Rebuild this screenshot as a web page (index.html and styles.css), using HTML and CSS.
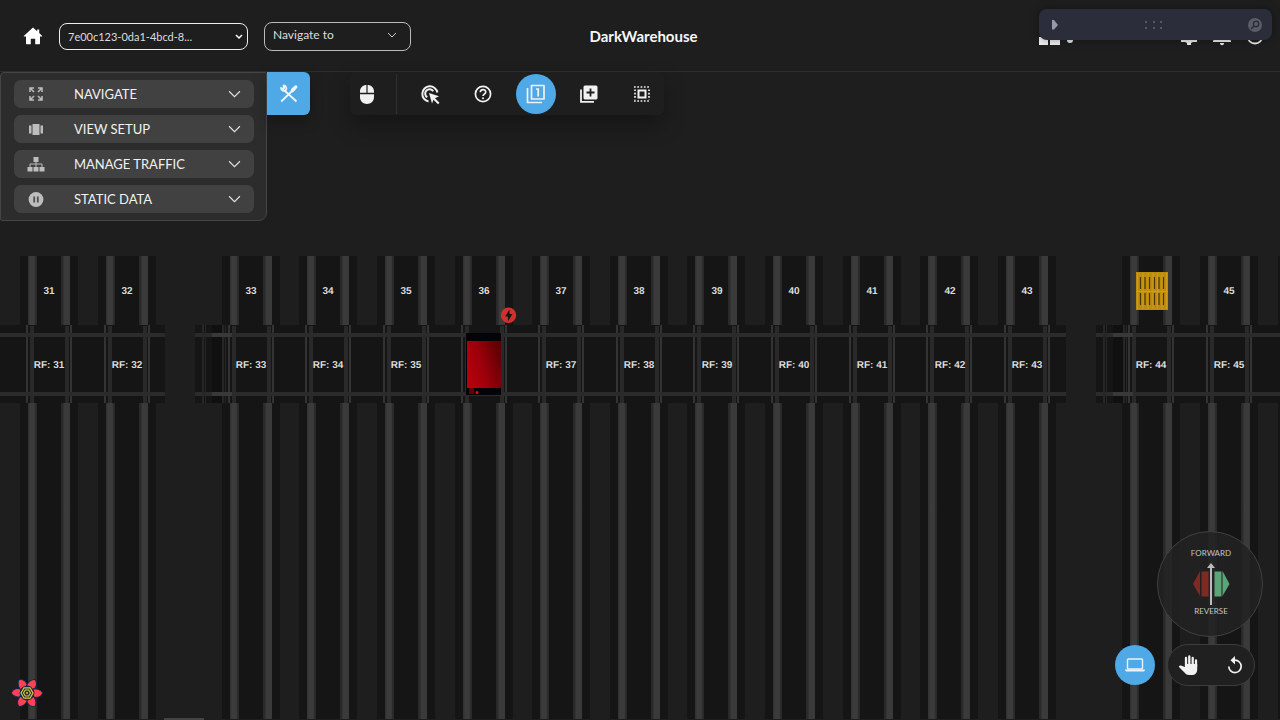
FILE: index.html
```html
<!DOCTYPE html>
<html lang="en">
<head>
<meta charset="utf-8">
<title>DarkWarehouse</title>
<link rel="stylesheet" href="styles.css">
</head>
<body>
<div class="app">
  <svg class="map" role="img" aria-label="Warehouse map">
    <defs>
      <linearGradient id="rail"><stop offset="0" stop-color="#303030"/><stop offset=".25" stop-color="#3b3b3b"/><stop offset=".7" stop-color="#3b3b3b"/><stop offset=".8" stop-color="#2d2d2d"/><stop offset="1" stop-color="#282828"/></linearGradient>
      <linearGradient id="railr"><stop offset="0" stop-color="#282828"/><stop offset=".25" stop-color="#2d2d2d"/><stop offset=".35" stop-color="#3b3b3b"/><stop offset="1" stop-color="#393939"/></linearGradient>
      <linearGradient id="body" x1="0" y1=".7" x2="1" y2=".3"><stop offset="0" stop-color="#b8000b"/><stop offset=".45" stop-color="#9c000a"/><stop offset="1" stop-color="#600005"/></linearGradient>
      <g id="lane">
        <path fill="#151515" d="M-29 256h58v69h-58zM-29 403h58v316h-58z"/>
        <path fill="url(#rail)" d="M-21 256h9v70h-9zM-21 403h9v316h-9z"/>
        <path fill="url(#railr)" d="M12 256h9v70h-9zM12 403h9v316h-9z"/>
      </g>
      <g id="cross">
        <path fill="#333" d="M-23 325h2v78h-2zM21 325h2v78h-2z"/>
        <path fill="#292929" d="M-19 326h4v77h-4zM16 326h4v77h-4z"/>
      </g>
      <g id="buffer">
        <path fill="#101010" d="M17 325h12v78h-12z"/>
        <path fill="#262626" d="M7 325h2v78h-2zM10 325h1v78h-1zM27 325h2v78h-2zM30 325h1v78h-1z"/>
        <path fill="#393939" d="M17 333h20v4h-20zM17 392h20v4h-20z"/>
      </g>
    </defs>
    <use href="#lane" x="49"/><use href="#lane" x="127"/><use href="#lane" x="251"/><use href="#lane" x="328"/><use href="#lane" x="406"/><use href="#lane" x="484"/><use href="#lane" x="561"/><use href="#lane" x="639"/><use href="#lane" x="716"/><use href="#lane" x="794"/><use href="#lane" x="872"/><use href="#lane" x="949"/><use href="#lane" x="1027"/><use href="#lane" x="1151"/><use href="#lane" x="1229"/><use href="#lane" x="1307"/>
    <path fill="#151515" d="M0 325h165v78H0zM195 325h871v78H195zM1096 325h900v78h-900z"/>
    <use href="#cross" x="49"/><use href="#cross" x="127"/><use href="#cross" x="251"/><use href="#cross" x="328"/><use href="#cross" x="406"/><use href="#cross" x="484"/><use href="#cross" x="561"/><use href="#cross" x="639"/><use href="#cross" x="716"/><use href="#cross" x="794"/><use href="#cross" x="872"/><use href="#cross" x="949"/><use href="#cross" x="1027"/><use href="#cross" x="1151"/><use href="#cross" x="1229"/><use href="#cross" x="1307"/>
    <path fill="#2b2b2b" d="M0 333h165v4H0zM0 392h165v4H0zM195 333h871v4H195zM195 392h871v4H195zM1096 333h900v4h-900zM1096 392h900v4h-900z"/>
    <use href="#buffer" x="195"/><use href="#buffer" x="1096"/>
    <g class="map-label">
      <text x="49" y="294">31</text><text x="127" y="294">32</text><text x="251" y="294">33</text><text x="328" y="294">34</text><text x="406" y="294">35</text><text x="484" y="294">36</text><text x="561" y="294">37</text><text x="639" y="294">38</text><text x="717" y="294">39</text><text x="794" y="294">40</text><text x="872" y="294">41</text><text x="950" y="294">42</text><text x="1027" y="294">43</text><text x="1229" y="294">45</text>
      <text x="49" y="368">RF: 31</text><text x="127" y="368">RF: 32</text><text x="251" y="368">RF: 33</text><text x="328" y="368">RF: 34</text><text x="406" y="368">RF: 35</text><text x="561" y="368">RF: 37</text><text x="639" y="368">RF: 38</text><text x="717" y="368">RF: 39</text><text x="794" y="368">RF: 40</text><text x="872" y="368">RF: 41</text><text x="950" y="368">RF: 42</text><text x="1027" y="368">RF: 43</text><text x="1151" y="368">RF: 44</text><text x="1229" y="368">RF: 45</text>
    </g>
    <g>
      <rect x="466" y="333" width="35" height="62" rx="1" fill="#030308"/>
      <rect x="467" y="341" width="34" height="47" fill="url(#body)"/>
      <rect x="469" y="388" width="5" height="6" fill="#5e0006"/>
      <circle cx="477" cy="392.500" r="1.500" fill="#f00012"/>
      <circle cx="508.500" cy="315.300" r="7.700" fill="#d32f2f"/>
      <path fill="#151515" d="M509.500 309.500v4.500h3l-4.600 7.500v-5h-2.800z"/>
    </g>
    <g>
      <rect x="1136" y="272" width="32" height="38" fill="#bd8c0d"/>
      <path stroke="#d19e12" stroke-width="1" d="M1137.500 273v36M1143 273v36M1148 273v36M1153 273v36M1157.500 273v36M1162 273v36M1166.500 273v36M1136 291.500h32"/>
      <path stroke="#49370a" stroke-width="1.200" d="M1140.500 277v12M1145 277v12M1149.500 277v12M1154.500 277v12M1159 277v12M1163.500 277v12M1140.500 293v12M1145 293v12M1149.500 293v12M1154.500 293v12M1159 293v12M1163.500 293v12"/>
    </g>
  </svg>

  <header class="header">
    <div class="header-left">
      <a class="home" href="#" aria-label="Home"><svg width="20" height="20" viewBox="0 0 20 20"><path fill="#fff" d="M10 1.500 1 9.700c-.4.500-.2.900.4.900H3v6.600c0 .6.400 1 1 1h3.800v-5.400h4.400v5.400H16c.6 0 1-.4 1-1v-6.600h1.600c.6 0 .8-.4.400-.9l-2.800-2.600V3.500h-2v1.800z"/></svg></a>
      <label class="picker picker-id">
        <select aria-label="Warehouse"><option>7e00c123-0da1-4bcd-8...</option></select>
        <svg width="8" height="6" viewBox="0 0 8 6"><path fill="none" stroke="#fff" stroke-width="1.500" d="m1 1 3 3 3-3"/></svg>
      </label>
      <label class="picker picker-nav">
        <select aria-label="Navigate to"><option>Navigate to</option></select>
        <svg width="10" height="6" viewBox="0 0 10 6"><path fill="none" stroke="#ccc" d="m1 1 4 4 4-4"/></svg>
      </label>
    </div>
    <h1 class="title">DarkWarehouse</h1>
    <div class="header-right">
      <button class="plain" aria-label="Apps"><svg width="34" height="20" viewBox="0 0 34 20"><path fill="#eee" d="M2 2h7v7H2zM11 2h9v7h-9zM0 11h9v8H0zM11 11h10v8H11z"/><circle cx="31" cy="14" r="3" fill="#ddeaf2"/></svg></button>
      <div class="alerts">
        <button class="plain" aria-label="Alarms"><svg width="18" height="20" viewBox="0 0 18 20"><path fill="#eee" d="M1 14v2h4l2 1v2h4v-2l2-1h4v-2l-2-1V8c0-3-2-5-4-6H7C5 3 3 5 3 8v5z"/></svg></button>
        <button class="plain" aria-label="Notifications"><svg width="18" height="20" viewBox="0 0 18 20"><path fill="#eee" d="M0 14.500v1.500h18v-1.500L15 13V8c0-3-2-5-4-6H7C5 3 3 5 3 8v5zM7 17h4c0 3-4 3-4 0z"/></svg></button>
        <button class="plain" aria-label="Account"><svg width="18" height="20" viewBox="0 0 18 20"><circle cx="9" cy="10" r="7.500" fill="none" stroke="#eee" stroke-width="1.800"/></svg></button>
      </div>
    </div>
  </header>

  <main class="workspace">
    <div class="toolrow">
      <nav class="menu" aria-label="Map menu">
        <button class="menu-item"><svg class="menu-icon" viewBox="0 0 20 20"><path fill="none" stroke="#bdbdbd" stroke-width="1.500" d="M4 8V4h4M4 4l4 4M12 4h4v4M16 4l-4 4M4 12v4h4M4 16l4-4M12 16h4v-4M16 16l-4-4"/></svg><span>NAVIGATE</span><svg class="chevron" viewBox="0 0 12 8"><path d="m1 1 5 5 5-5"/></svg></button>
        <button class="menu-item"><svg class="menu-icon" viewBox="0 0 20 20"><path fill="#bdbdbd" d="M6.500 5h7v11h-7zM3 6.500h2.500v8H3zM14.500 6.500H17v8h-2.500z"/></svg><span>VIEW SETUP</span><svg class="chevron" viewBox="0 0 12 8"><path d="m1 1 5 5 5-5"/></svg></button>
        <button class="menu-item"><svg class="menu-icon" viewBox="0 0 20 20"><path fill="#bdbdbd" d="M7.500 3h5v5h-5zM1.500 13h5v4.500h-5zM7.500 13h5v4.500h-5zM13.500 13h5v4.500h-5z"/><path fill="none" stroke="#bdbdbd" d="M10 8v5M4 13v-3h12v3"/></svg><span>MANAGE TRAFFIC</span><svg class="chevron" viewBox="0 0 12 8"><path d="m1 1 5 5 5-5"/></svg></button>
        <button class="menu-item"><svg class="menu-icon" viewBox="0 0 20 20"><circle cx="10" cy="10.500" r="7.400" fill="#bdbdbd"/><path fill="#505050" d="M7.300 7.500h1.800v6H7.300zM10.900 7.500h1.800v6h-1.800z"/></svg><span>STATIC DATA</span><svg class="chevron" viewBox="0 0 12 8"><path d="m1 1 5 5 5-5"/></svg></button>
      </nav>
      <button class="tools-toggle" aria-label="Tools"><svg width="24" height="24" viewBox="0 0 24 24"><path fill="none" stroke="#f4f4f4" stroke-width="1.800" d="M7.500 8.500 19.500 19.500M4.200 19.500 14 10"/><path fill="#f4f4f4" d="m13.500 10 .5-3 4-3.500c1.500-.8 3 .7 2.200 2.200L17 9.500l-2.500 1.500z"/><path fill="none" stroke="#f4f4f4" stroke-width="1.800" stroke-linejoin="round" d="M6.500 3.500c2.500.2 3.500 2.500 2.500 4.500-2 1.500-4.800.7-5-2l2.500.8.700-.8z"/></svg></button>
      <div class="toolbar" role="toolbar">
        <button class="tool mouse" aria-label="Mouse"><svg width="24" height="24" viewBox="0 0 24 24"><path fill="#f1f1f1" d="M11.400 3v7.800H5V9.500C5 5.500 8 3 11.400 3zM12.600 3C16 3 19 5.500 19 9.500v1.300h-6.400zM5 12.200h14V15c0 9.300-14 9.300-14 0z"/></svg></button>
        <button class="tool" aria-label="Click select"><svg width="24" height="24" viewBox="0 0 24 24"><path fill="none" stroke="#f1f1f1" stroke-width="2" d="M10.500 19.400A7.600 7.600 0 1 1 19.400 10.500M9.300 15.200A4.300 4.300 0 1 1 15.200 9.300"/><path fill="#f1f1f1" d="m11 11 10 3.300-4 2 4.500 4.500-1.500 1.500-4.500-4.500-1.500 3.700z"/></svg></button>
        <button class="tool" aria-label="Help"><svg width="24" height="24" viewBox="0 0 24 24"><circle cx="12" cy="12" r="7.600" fill="none" stroke="#f1f1f1" stroke-width="1.700"/><path fill="none" stroke="#f1f1f1" stroke-width="1.700" d="M9.300 10.200c0-3.500 5.400-3.400 5.400-.2 0 2-2.700 2.200-2.700 4"/><circle cx="12" cy="16.200" r="1" fill="#f1f1f1"/></svg></button>
        <button class="tool active" aria-label="Single layer"><svg width="24" height="24" viewBox="0 0 24 24"><path fill="none" stroke="#f1f1f1" stroke-width="1.700" stroke-linejoin="round" d="M7.500 3.500h12.500v13.500H7.500zM3.500 6v14.500H18"/><path fill="none" stroke="#f1f1f1" stroke-width="1.700" d="M12 7h2.200v7.500"/></svg></button>
        <button class="tool" aria-label="Add layer"><svg width="24" height="24" viewBox="0 0 24 24"><path fill="none" stroke="#f1f1f1" stroke-width="1.800" d="M4 7.500v12.300h13"/><rect x="6.500" y="3.500" width="14" height="14" rx="1.500" fill="#f1f1f1"/><path stroke="#1e1e1e" stroke-width="1.800" d="M13.500 6.500v8M9.500 10.500h8"/></svg></button>
        <button class="tool" aria-label="Select all"><svg width="24" height="24" viewBox="0 0 24 24"><path fill="none" stroke="#f1f1f1" stroke-width="2" d="M8.500 8.500h7v7h-7z"/><path fill="none" stroke="#f1f1f1" stroke-width="1.700" stroke-dasharray="1.700 1.600" d="M4 5h16.300M4 19h16.300M5 7.400v10M19 7.400v10"/></svg></button>
      </div>
    </div>
  </main>

  <div class="float-panel">
    <button class="plain" aria-label="Expand"><svg width="8" height="12" viewBox="0 0 8 12"><path fill="#9699a8" d="M1 1h2l4 5-4 4.500H1z"/></svg></button>
    <svg width="18" height="10" viewBox="0 0 18 10"><path fill="#555966" d="M0 1h2v2H0zM8 1h2v2H8zM15 1h2v2h-2zM0 7h2v2H0zM8 7h2v2H8zM15 7h2v2h-2z"/></svg>
    <button class="plain" aria-label="Search"><svg width="14" height="14" viewBox="0 0 14 14"><circle cx="7" cy="7" r="7" fill="#585d66"/><circle cx="8" cy="6" r="2.700" fill="none" stroke="#2b2e3a" stroke-width="1.400"/><path stroke="#2b2e3a" stroke-width="1.600" d="M6 8l-3 3"/></svg></button>
  </div>

  <div class="dock">
    <div class="joystick">
      <span>FORWARD</span>
      <svg width="38" height="42" viewBox="0 0 38 42"><path fill="#7e2a22" d="M1 21 8 8v25zM9.500 8.500h7v25h-7z"/><path fill="#5aa678" d="M22.500 8.500h7v25h-7zM30.500 8l7 13-7 12z"/><path fill="#bbb" d="M19 0l4 5h-3v37h-2V5h-3z"/></svg>
      <span>REVERSE</span>
    </div>
    <div class="dock-actions">
      <button class="screen" aria-label="Screen"><svg width="22" height="18" viewBox="0 0 22 18"><rect x="3.500" y="3" width="15" height="10" rx="1" fill="none" stroke="#e9f4fb" stroke-width="1.400"/><path fill="#e9f4fb" d="M1 13.500h20c0 1.500-1 2-2 2H3c-1 0-2-.5-2-2z"/></svg></button>
      <div class="pill">
        <button class="plain" aria-label="Pan"><svg width="20" height="22" viewBox="0 0 20 22"><path fill="none" stroke="#f1f1f1" stroke-width="2.300" stroke-linecap="round" d="M8 12V4M11.300 12V2.500M14.700 12V4M18 13V6.500"/><path fill="#f1f1f1" d="M7 10h12.200v5c0 4-2 6-5.500 6H11c-2 0-3-1-4.300-2.300L1 13c-.7-1 1-2.200 2.500-1.300L7 13z"/></svg></button>
        <button class="plain" aria-label="Reset"><svg width="18" height="20" viewBox="0 0 18 20"><path fill="none" stroke="#f1f1f1" stroke-width="1.700" d="M2.800 11.500A6.200 6.200 0 1 0 9 5.200H7"/><path fill="#f1f1f1" d="M9 1v8.500L4.500 5.200z"/></svg></button>
      </div>
    </div>
  </div>

  <button class="query-badge plain" aria-label="Open query tools">
    <svg width="34" height="32" viewBox="-17 -16 34 32">
      <defs><path id="petal" d="M-5.500-4.500-11-4.300C-14-3.500-15.500-1-15.500 0-15 2-12 3.500-9.500 4L-6 4.200-7 0z"/></defs>
      <g fill="#ff4154" stroke="#002c4b" stroke-width="1"><use href="#petal"/><use href="#petal" transform="rotate(60)"/><use href="#petal" transform="rotate(120)"/><use href="#petal" transform="rotate(180)"/><use href="#petal" transform="rotate(240)"/><use href="#petal" transform="rotate(300)"/></g>
      <path fill="#263238" stroke="#d9c94a" stroke-width="1.200" d="M-3-5.200h6L6 0 3 5.200h-6L-6 0z"/>
      <path fill="none" stroke="#d9c94a" stroke-width="1.100" d="M-1.700-3h3.400L3.500 0 1.700 3h-3.400L-3.500 0z"/><circle r="1" fill="#d9c94a"/>
    </svg>
  </button>
  <div class="drawer-handle"></div>
</div>
</body>
</html>
```

FILE: styles.css
```css
* { box-sizing: border-box; }
body { margin: 0; background: #1e1e1e; color: #f1f1f1; font-family: Lato, "Open Sans", sans-serif; }
button { padding: 0; border: 0; font: inherit; color: inherit; background: none; cursor: pointer; }
svg { display: block; flex: none; }

.app { position: relative; min-height: 100vh; overflow: hidden; display: flex; flex-direction: column; }
.map { position: absolute; inset: 0; width: 100%; height: 100%; }
.map-label { font: bold 10px "Liberation Sans", Arial, sans-serif; fill: #dcdcdc; text-anchor: middle; text-rendering: geometricPrecision; }

.header { position: relative; display: grid; grid-template-columns: 1fr auto 1fr; align-items: center; height: 72px; padding: 1px 16px 0 23px; border-bottom: 1px solid #2e2e2e; }
.header-left { display: flex; align-items: center; }
.home { margin-right: 16px; }
.picker { position: relative; display: flex; }
.picker select { appearance: none; width: 100%; border: 1px solid #bbb; border-radius: 8px; background: #1e1e1e; color: #ddd; font: 12px Lato, sans-serif; padding: 0 8px; }
.picker svg { position: absolute; pointer-events: none; }
.picker-id { width: 189px; margin-right: 16px; }
.picker-id select { height: 27px; border-color: #eee; font-size: 11px; }
.picker-id svg { right: 5px; top: 11px; }
.picker-nav { width: 147px; }
.picker-nav select { height: 29px; padding-bottom: 4px; }
.picker-nav svg { right: 14px; top: 10px; }
.title { margin: 0; font-size: 15px; line-height: 24px; font-weight: 700; color: #f4f7fa; }
.header-right { display: flex; justify-content: space-between; align-items: center; justify-self: end; width: 225px; }
.alerts { display: flex; gap: 15px; }
.plain { display: flex; align-items: center; justify-content: center; }

.workspace { position: relative; flex: 1; }
.toolrow { display: flex; align-items: flex-start; }
.menu { display: flex; flex-direction: column; gap: 7px; width: 267px; padding: 7px 12px 7px 13px; background: #2c2c2c; border: 1px solid #454545; border-radius: 4px 2px 8px 2px; }
.menu-item { display: flex; align-items: center; height: 28px; padding: 0 13px 0 12px; border-radius: 7px; background: #414141; font-size: 13px; line-height: 20px; }
.menu-icon { width: 20px; height: 20px; margin-right: 28px; }
.chevron { width: 13px; height: 9px; margin-left: auto; fill: none; stroke: #e4e4e4; }
.tools-toggle { display: flex; align-items: center; justify-content: center; width: 43px; height: 43px; border-radius: 0 6px 6px 0; background: #4fa9e6; box-shadow: 0 6px 14px rgba(0, 0, 0, .25); }
.toolbar { display: flex; align-items: center; gap: 13px; height: 43px; margin-left: 40px; padding-right: 2px; border-radius: 6px; background: #1e1e1e; box-shadow: 0 10px 22px rgba(0, 0, 0, .3); }
.tool { display: flex; align-items: center; justify-content: center; width: 40px; height: 40px; border-radius: 50%; }
.mouse { width: 47px; padding-right: 12px; border-right: 1px solid #303030; border-radius: 0; }
.active { background: #4fa9e6; }

.float-panel { position: absolute; top: 9px; right: 8px; display: flex; align-items: center; justify-content: space-between; width: 233px; height: 31px; padding: 0 10px 0 12px; border-radius: 8px; background: #2b2e3a; box-shadow: 0 0 8px rgba(0, 0, 0, .35); }

.dock { position: absolute; right: 17px; bottom: 34px; display: flex; flex-direction: column; align-items: flex-end; gap: 7px; }
.joystick { display: flex; flex-direction: column; align-items: center; justify-content: center; width: 106px; height: 106px; padding: 0 0 4px 2px; border: 1px solid #404040; border-radius: 50%; background: rgba(34, 34, 34, .85); color: #c4c4c4; font-size: 8px; line-height: 10px; }
.joystick svg { margin: 5px 0 1px; }
.dock-actions { display: flex; align-items: center; gap: 12px; margin-right: 8px; }
.screen { display: flex; align-items: center; justify-content: center; width: 40px; height: 40px; border-radius: 50%; background: #4fa9e6; }
.pill { display: flex; align-items: center; justify-content: space-between; width: 88px; height: 42px; padding: 0 10px; border: 1px solid #3d3d3d; border-radius: 21px; background: #202020; }

.query-badge { position: absolute; left: 10px; bottom: 11px; }
.drawer-handle { position: absolute; left: 164px; bottom: 0; width: 40px; height: 2px; background: #444; }
```
